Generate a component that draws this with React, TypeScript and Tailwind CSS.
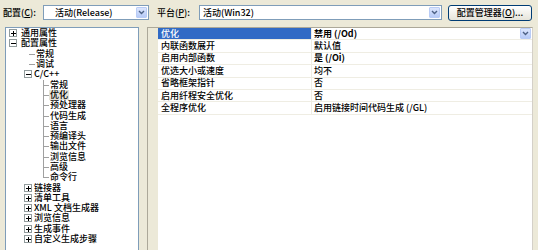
import React from "react";

const FONT = { fontFamily: '"Noto Sans CJK SC", "Liberation Sans", sans-serif' };

type Kind = "p1" | "m1" | "p2" | "m2" | "l2" | "l3" | "l3end";

const tree: { t: string; k: Kind; sel?: boolean }[] = [
  { t: "通用属性", k: "p1" },
  { t: "配置属性", k: "m1" },
  { t: "常规", k: "l2" },
  { t: "调试", k: "l2" },
  { t: "C/C++", k: "m2" },
  { t: "常规", k: "l3" },
  { t: "优化", k: "l3", sel: true },
  { t: "预处理器", k: "l3" },
  { t: "代码生成", k: "l3" },
  { t: "语言", k: "l3" },
  { t: "预编译头", k: "l3" },
  { t: "输出文件", k: "l3" },
  { t: "浏览信息", k: "l3" },
  { t: "高级", k: "l3" },
  { t: "命令行", k: "l3end" },
  { t: "链接器", k: "p2" },
  { t: "清单工具", k: "p2" },
  { t: "XML 文档生成器", k: "p2" },
  { t: "浏览信息", k: "p2" },
  { t: "生成事件", k: "p2" },
  { t: "自定义生成步骤", k: "p2" },
];

const rows = [
  { n: "优化", v: "禁用 (/Od)", bold: true, sel: true },
  { n: "内联函数展开", v: "默认值" },
  { n: "启用内部函数", v: "是 (/Oi)", bold: true },
  { n: "优选大小或速度", v: "均不" },
  { n: "省略框架指针", v: "否" },
  { n: "启用纤程安全优化", v: "否" },
  { n: "全程序优化", v: "启用链接时间代码生成 (/GL)" },
];

function ExpandBox({ x, open }: { x: number; open: boolean }) {
  return (
    <g>
      <rect x={x + 0.5} y={1.5} width={7} height={7} fill="#fff" stroke="#919B9C" />
      <path d={`M${x + 2} 5H${x + 7}`} stroke="#000" />
      {!open && <path d={`M${x + 4.5} 2.5V7.5`} stroke="#000" />}
    </g>
  );
}

function TreeGlyph({ k }: { k: Kind }) {
  const w = k === "p1" || k === "m1" ? 15 : k === "p2" || k === "m2" ? 28 : k === "l2" ? 30 : 44;
  return (
    <svg width={w} height={10} className="shrink-0 overflow-visible" shapeRendering="crispEdges">
      {(k === "p1" || k === "m1") && <ExpandBox x={3} open={k === "m1"} />}
      {(k === "p2" || k === "m2") && <ExpandBox x={18} open={k === "m2"} />}
      {k === "l2" && <path d="M23 5.5H29" stroke="#A0A0A0" />}
      {(k === "l3" || k === "l3end") && (
        <>
          <path d={k === "l3" ? "M37.5 0V11" : "M37.5 0V5.5"} stroke="#A0A0A0" />
          <path d="M37 5.5H43" stroke="#A0A0A0" />
        </>
      )}
    </svg>
  );
}

function Chevron() {
  return (
    <svg width="7" height="5" viewBox="0 0 7 5">
      <path d="M1 1l2.5 2.5L6 1" fill="none" stroke="#4D6185" strokeWidth="1.4" />
    </svg>
  );
}

function DropBtn() {
  return (
    <div className="w-[11px] h-[11px] shrink-0 rounded-[1px] border border-[#B9CCF6] bg-gradient-to-b from-[#DCE6FD] to-[#B7CBF7] flex items-center justify-center">
      <Chevron />
    </div>
  );
}

export default function App() {
  return (
    <div className="w-[538px] h-[250px] overflow-hidden bg-[#ECE9D8] text-[9px] font-medium text-black leading-[10px]" style={FONT}>
      <div className="flex items-center h-[27px] pl-[3px] pb-[2px]">
        <span className="w-[40px]">
          配置(<u>C</u>):
        </span>
        <div className="w-[106px] h-[15px] border border-[#7F9DB9] bg-white flex items-center justify-between pl-[11px] pr-[1px]">
          <span>活动(Release)</span>
          <DropBtn />
        </div>
        <span className="ml-[8px] w-[42px]">
          平台(<u>P</u>):
        </span>
        <div className="w-[243px] h-[15px] border border-[#7F9DB9] bg-white flex items-center justify-between pl-[3px] pr-[1px]">
          <span>活动(Win32)</span>
          <DropBtn />
        </div>
        <button className="ml-[6px] w-[84px] h-[16px] rounded-[3px] border border-[#003C74] bg-gradient-to-b from-white to-[#E6E4DA] flex items-center justify-center text-[9px] font-medium">
          配置管理器(<u>O</u>)...
        </button>
      </div>

      <div className="flex pl-[5px]">
        <div className="w-[134px] h-[230px] border border-[#7F9DB9] bg-white">
          {tree.map((r, i) => (
            <div key={i} className="flex items-center h-[10.3px] whitespace-nowrap">
              <TreeGlyph k={r.k} />
              <span className={r.sel ? "bg-[#E4E2D8] px-[1px] -ml-[1px]" : ""}>{r.t}</span>
            </div>
          ))}
        </div>

        <div className="ml-[8px] w-[386px] h-[230px] border-l border-t border-r border-l-[#ACA899] border-t-[#ACA899] border-r-[#D4D0C8] bg-white flex">
          <div className="w-[10px] shrink-0 bg-[#ECE9D8]" />
          <div className="flex-1">
            {rows.map((r, i) => (
              <div key={i} className="flex h-[12.4px] border-b border-[#EFEDE3]">
                <div
                  className={`w-[154px] shrink-0 pl-[3px] flex items-center border-r border-[#EFEDE3] ${
                    r.sel ? "bg-[#316AC5] text-white" : ""
                  }`}
                >
                  {r.n}
                </div>
                <div className={`flex-1 pl-[2px] pr-[1px] flex items-center justify-between ${r.bold ? "font-bold" : ""}`}>
                  <span>{r.v}</span>
                  {r.sel && <DropBtn />}
                </div>
              </div>
            ))}
          </div>
        </div>
      </div>
    </div>
  );
}
